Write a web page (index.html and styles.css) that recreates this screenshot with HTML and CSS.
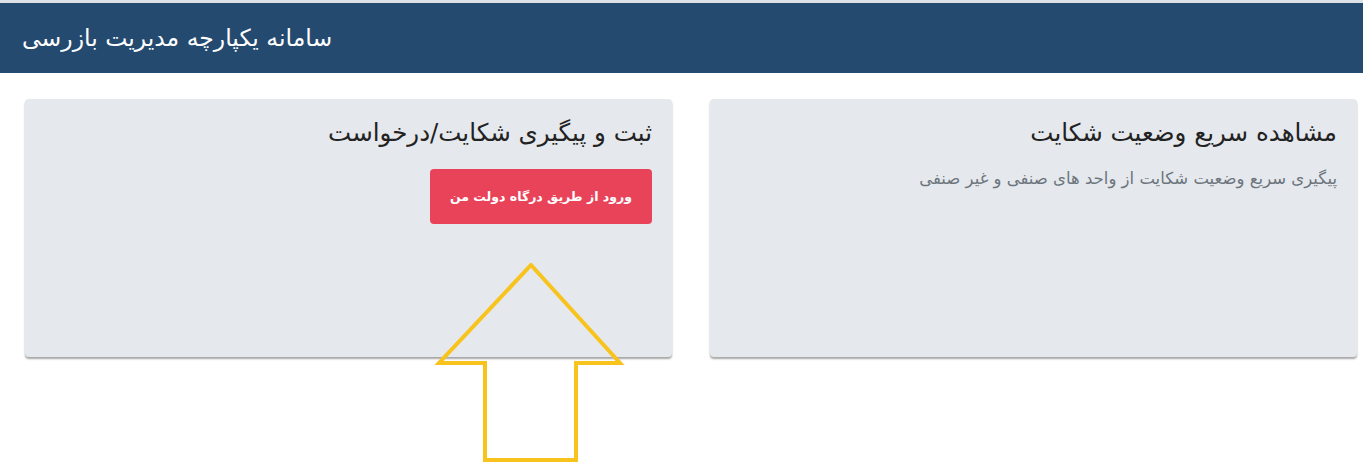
FILE: index.html
```html
<!DOCTYPE html>
<html lang="fa">
  <head>
    <meta charset="UTF-8" />
    <meta name="viewport" content="width=device-width, initial-scale=1.0" />
    <title>سامانه یکپارچه مدیریت بازرسی</title>
    <link rel="stylesheet" href="styles.css">
  </head>
  <body>
    <div class="topline"></div>
    <div class="header">
      <span class="brand">سامانه یکپارچه مدیریت بازرسی</span>
    </div>
    <div class="cards">
      <div class="card">
        <h3 class="card-title">مشاهده سریع وضعیت شکایت</h3>
        <p class="card-text">پیگیری سریع وضعیت شکایت از واحد های صنفی و غیر صنفی</p>
      </div>
      <div class="card">
        <h3 class="card-title">ثبت و پیگیری شکایت/درخواست</h3>
        <a class="btn" href="#">ورود از طریق درگاه دولت من</a>
      </div>
    </div>
    <!-- فلش راهنما روی کارت -->
    <svg class="arrow" width="200" height="210" viewBox="0 0 200 210">
      <polygon points="103,2 192,100 148,100 148,197 57,197 57,100 11,100"
        fill="none" stroke="#f8c31c" stroke-width="4" stroke-linejoin="miter" />
    </svg>
  </body>
</html>
```

FILE: styles.css
```css
* {
  padding: 0;
  margin: 0;
  box-sizing: border-box;
}
html,
body {
  height: 100%;
}
body {
  background-color: #fff;
  font-family: "DejaVu Sans", "Noto Sans", sans-serif;
  position: relative;
  min-height: 475px;
}
.topline {
  height: 3px;
  background-color: #dde2e8;
}
.header {
  height: 70px;
  background-color: #254a70;
  display: flex;
  align-items: center;
  padding-left: 22px;
}
.brand {
  color: #fff;
  font-size: 23.5px;
  direction: rtl;
}
.cards {
  direction: rtl;
  display: flex;
  gap: 38px;
  padding: 26px 6px 0 25px;
}
.card {
  flex: 1;
  height: 258px;
  background-color: #e5e8ec;
  border-radius: 4px;
  box-shadow: 0 2px 2px rgba(0, 0, 0, 0.35);
  padding: 17px 20px 0 20px;
}
.card-title {
  font-size: 24.5px;
  font-weight: normal;
  color: #222;
  line-height: 34px;
}
.card-text {
  margin-top: 19px;
  font-size: 16.5px;
  color: #6c757d;
}
.btn {
  display: inline-block;
  margin-top: 19px;
  width: 222px;
  height: 55px;
  line-height: 55px;
  text-align: center;
  background-color: #e9435a;
  color: #fff;
  font-size: 12.5px;
  font-weight: bold;
  text-decoration: none;
  border-radius: 4px;
}
.arrow {
  position: absolute;
  left: 428px;
  top: 263px;
  z-index: 2;
}
```
